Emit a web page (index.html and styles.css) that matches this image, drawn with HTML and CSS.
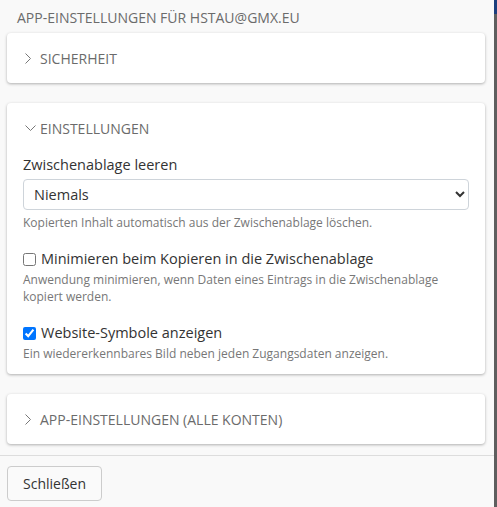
FILE: index.html
```html
<!DOCTYPE html>
<html lang="de">
<head>
<meta charset="utf-8">
<link rel="stylesheet" href="styles.css">
</head>
<body>
<div class="frame">
  <div class="modal">
    <div class="content">
      <h1 class="title">App-Einstellungen für hstau@gmx.eu</h1>

      <section class="card">
        <div class="card-header">
          <svg class="chev" width="6" height="11" viewBox="0 0 6 11"><path d="M0.5 0.5 L5.5 5.5 L0.5 10.5" fill="none" stroke="#777" stroke-width="1"/></svg>
          <span>Sicherheit</span>
        </div>
      </section>

      <section class="card">
        <div class="card-header">
          <svg class="chev-down" width="11" height="6" viewBox="0 0 11 6"><path d="M0.5 0.5 L5.5 5.5 L10.5 0.5" fill="none" stroke="#777" stroke-width="1"/></svg>
          <span>Einstellungen</span>
        </div>
        <div class="card-body">
          <div class="field">
            <label class="label" for="clear">Zwischenablage leeren</label>
            <select id="clear" class="select"><option>Niemals</option></select>
            <p class="help">Kopierten Inhalt automatisch aus der Zwischenablage löschen.</p>
          </div>
          <div class="field">
            <label class="check"><input type="checkbox"><span>Minimieren beim Kopieren in die Zwischenablage</span></label>
            <p class="help help-check">Anwendung minimieren, wenn Daten eines Eintrags in die Zwischenablage kopiert werden.</p>
          </div>
          <div class="field">
            <label class="check"><input type="checkbox" checked><span>Website-Symbole anzeigen</span></label>
            <p class="help help-check">Ein wiedererkennbares Bild neben jeden Zugangsdaten anzeigen.</p>
          </div>
        </div>
      </section>

      <section class="card">
        <div class="card-header">
          <svg class="chev" width="6" height="11" viewBox="0 0 6 11"><path d="M0.5 0.5 L5.5 5.5 L0.5 10.5" fill="none" stroke="#777" stroke-width="1"/></svg>
          <span>App-Einstellungen (alle Konten)</span>
        </div>
      </section>
    </div>
    <div class="footer">
      <button class="btn" type="button">Schließen</button>
    </div>
  </div>
  <div class="edge"><div class="edge-top"></div></div>
</div>
</body>
</html>
```

FILE: styles.css
```css
* { box-sizing: border-box; }
html, body { margin: 0; padding: 0; }
body {
  font-family: "Open Sans", "Liberation Sans", sans-serif;
  color: #333;
  background: #f9f9f9;
  width: 497px;
  height: 507px;
  overflow: hidden;
}
.frame {
  display: flex;
  height: 507px;
}
.modal {
  width: 494px;
  background: #f9f9f9;
  display: flex;
  flex-direction: column;
}
.edge {
  width: 3px;
  background: #5e5e5e;
}
.edge-top {
  height: 14px;
  background: #1c3f7d;
}
.content {
  padding: 8px 9px 11px 7px;
  border-bottom: 1px solid #ddd;
}
.title {
  margin: 0 0 5px 10px;
  font-size: 14px;
  font-weight: 400;
  line-height: 20px;
  text-transform: uppercase;
  color: #6b6b6b;
}
.card {
  background: #fff;
  border-radius: 4px;
  box-shadow: 0 1px 3px rgba(0,0,0,0.3);
  margin-bottom: 20px;
}
.card:last-child { margin-bottom: 0; }
.card-header {
  height: 50px;
  display: flex;
  align-items: center;
  padding-left: 18px;
  font-size: 14px;
  text-transform: uppercase;
  color: #6b6b6b;
}
.chev { margin: 0 9px 0 0; }
.chev-down { margin: 0 4px 0 0; }
.card-body {
  padding: 2px 16px 12px 16px;
}
.field { margin-bottom: 18px; }
.field:last-child { margin-bottom: 0; }
.label {
  display: block;
  font-size: 14.5px;
  line-height: 20px;
  color: #333;
  margin-bottom: 4px;
}
.select {
  display: block;
  width: 446px;
  height: 31px;
  font-family: inherit;
  font-size: 14.5px;
  color: #333;
  padding: 0 6px;
  border: 1px solid #ced4da;
  border-radius: 4px;
  background: #fff;
}
.help {
  margin: 4px 0 0;
  font-size: 12px;
  line-height: 17px;
  color: #777;
}
.help-check { margin-top: 2px; }
.check {
  display: flex;
  align-items: center;
  font-size: 14.5px;
  line-height: 20px;
  color: #333;
}
.check input {
  width: 13px;
  height: 13px;
  margin: 0 5px 0 0;
}
.footer {
  padding: 10px 7px;
}
.btn {
  font-family: inherit;
  font-size: 14px;
  color: #333;
  background: #fafafa;
  border: 1px solid #ccc;
  border-radius: 4px;
  height: 35px;
  padding: 0 15px;
}
```
